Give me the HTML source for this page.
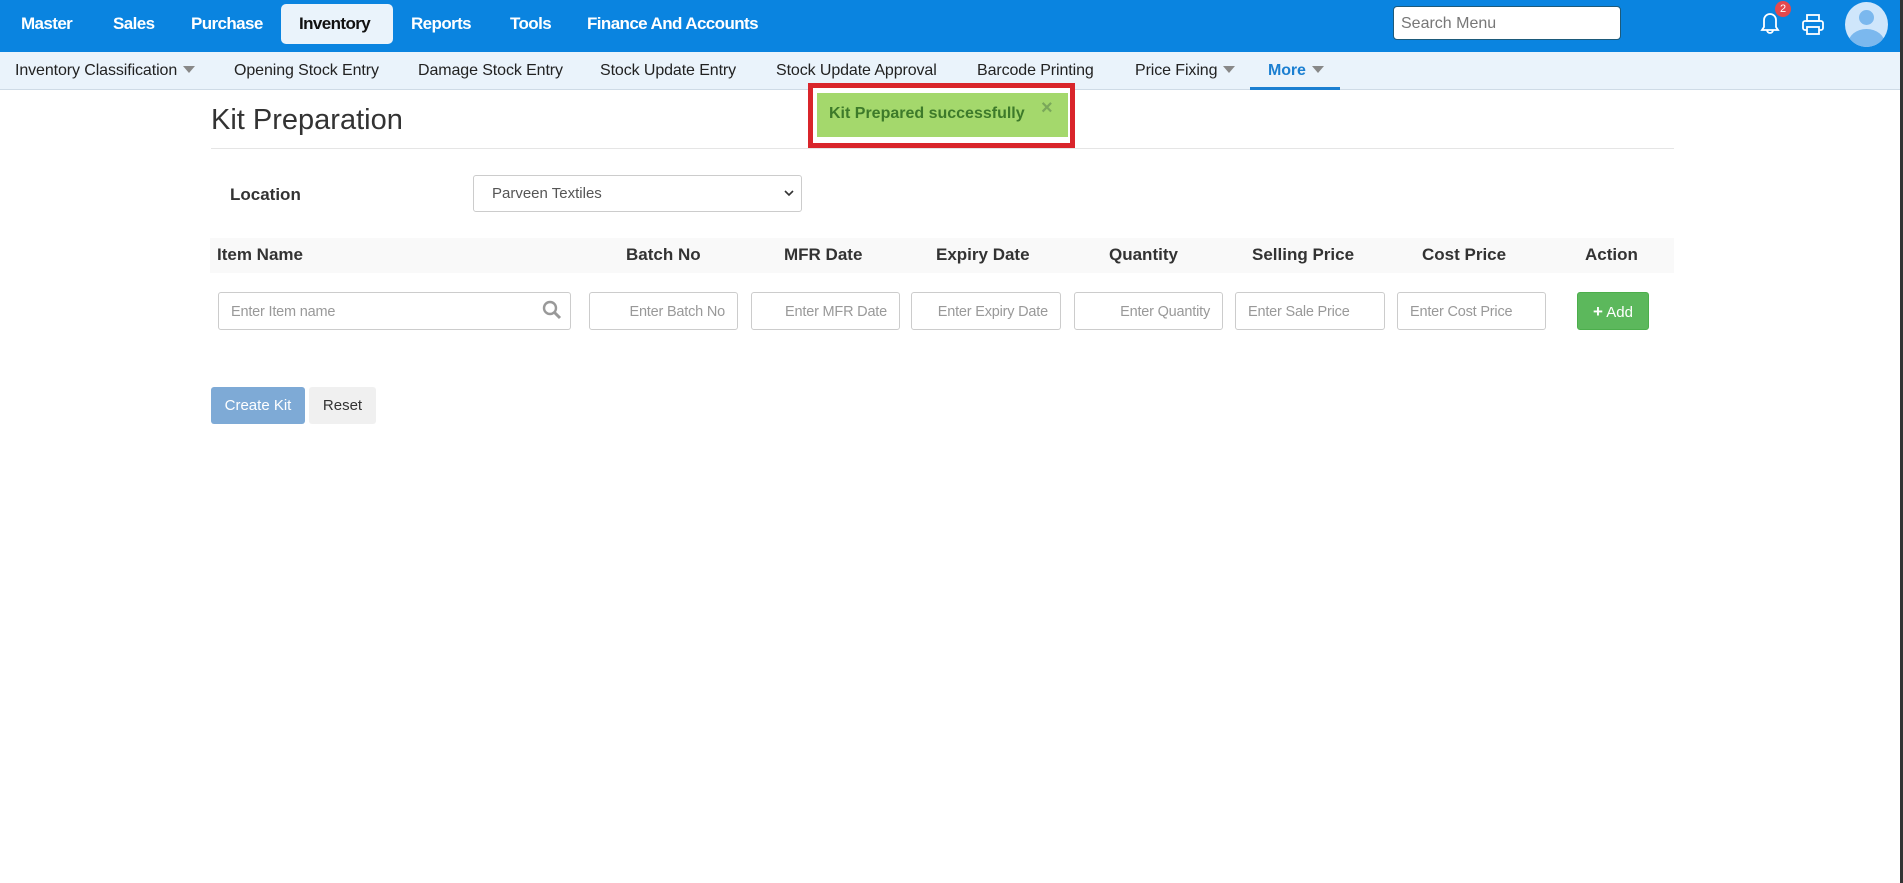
<!DOCTYPE html>
<html><head><meta charset="utf-8"><style>
*{box-sizing:border-box;margin:0;padding:0}
body{width:1903px;height:883px;background:#fff;font-family:"Liberation Sans",sans-serif;position:relative;overflow:hidden}
.a{position:absolute;white-space:nowrap}
.top{left:0;top:0;width:1900px;height:52px;background:#0a84e0}
.m{top:14px;color:#fff;font-weight:bold;font-size:17px;letter-spacing:-0.6px}
.sub{left:0;top:52px;width:1900px;height:38px;background:#eaf3fb;border-bottom:1px solid #cfdbe6}
.s{top:62px;font-size:16px;color:#222;letter-spacing:-0.1px}
.tri{display:inline-block;width:0;height:0;border-left:6px solid transparent;border-right:6px solid transparent;border-top:7px solid #888;margin-left:6px;vertical-align:2px}
.h{top:245px;font-weight:bold;font-size:17px;color:#333}
.in{top:292px;height:38px;border:1px solid #ccc;border-radius:3px;font-size:14.5px;color:#999;padding:11px 12px 0;letter-spacing:-0.2px}
</style></head><body>
<div class="a top"></div>
<div class="a" style="left:281px;top:4px;width:112px;height:40px;background:#eaf3fb;border-radius:5px"></div>
<div class="a m" style="left:21px">Master</div>
<div class="a m" style="left:113px">Sales</div>
<div class="a m" style="left:191px">Purchase</div>
<div class="a m" style="left:299px;color:#111">Inventory</div>
<div class="a m" style="left:411px">Reports</div>
<div class="a m" style="left:510px">Tools</div>
<div class="a m" style="left:587px">Finance And Accounts</div>
<div class="a" style="left:1393px;top:6px;width:228px;height:34px;background:#fff;border:1px solid #1d5a7a;border-radius:4px;font-size:16px;color:#777;padding:8px 7px">Search Menu</div>
<svg class="a" style="left:1756px;top:8px" width="28" height="30" viewBox="0 0 28 30"><path d="M6 22 L8 19 V12 A6 6 0 0 1 20 12 V19 L22 22 Z M11 22 a3 3 0 0 0 6 0" fill="none" stroke="#fff" stroke-width="1.8"/></svg>
<div class="a" style="left:1775px;top:1px;width:16px;height:16px;border-radius:8px;background:#e5484d;color:#fff;font-size:11px;text-align:center;line-height:16px">2</div>
<svg class="a" style="left:1800px;top:12px" width="26" height="26" viewBox="0 0 26 26"><rect x="7" y="3" width="12" height="6" fill="none" stroke="#fff" stroke-width="1.8"/><rect x="3" y="9" width="20" height="9" rx="2" fill="none" stroke="#fff" stroke-width="1.8"/><rect x="7" y="15" width="12" height="7" fill="#0a84e0" stroke="#fff" stroke-width="1.8"/></svg>
<div class="a" style="left:1845px;top:2px;width:43px;height:45px;border-radius:50%;background:#cfe6fb;overflow:hidden">
<div class="a" style="left:14px;top:8px;width:15px;height:15px;border-radius:50%;background:#7bb8ee"></div>
<div class="a" style="left:3px;top:27px;width:37px;height:30px;border-radius:50%;background:#7bb8ee"></div></div>
<div class="a" style="left:1900px;top:0;width:3px;height:883px;background:#333"></div>

<div class="a sub"></div>
<div class="a s" style="left:15px">Inventory Classification<span class="tri"></span></div>
<div class="a s" style="left:234px">Opening Stock Entry</div>
<div class="a s" style="left:418px">Damage Stock Entry</div>
<div class="a s" style="left:600px">Stock Update Entry</div>
<div class="a s" style="left:776px">Stock Update Approval</div>
<div class="a s" style="left:977px">Barcode Printing</div>
<div class="a s" style="left:1135px">Price Fixing<span class="tri"></span></div>
<div class="a s" style="left:1268px;color:#1b7fd1;font-weight:bold">More<span class="tri"></span></div>
<div class="a" style="left:1250px;top:87px;width:90px;height:3px;background:#1b7fd1"></div>

<div class="a" style="left:211px;top:104px;font-size:29px;color:#333">Kit Preparation</div>
<div class="a" style="left:211px;top:148px;width:1463px;height:1px;background:#e5e5e5"></div>

<div class="a" style="left:808px;top:83px;width:267px;height:65px;border:5px solid #d9252b;background:#fff"></div>
<div class="a" style="left:817px;top:93px;width:251px;height:44px;background:#a4d86c"></div>
<div class="a" style="left:829px;top:105px;font-size:16px;font-weight:bold;color:#3d7a2a">Kit Prepared successfully</div>
<div class="a" style="left:1041px;top:97px;font-size:20px;font-weight:bold;color:#7aa85a">×</div>

<div class="a" style="left:230px;top:185px;font-size:17px;font-weight:bold;color:#333">Location</div>
<div class="a" style="left:473px;top:175px;width:329px;height:37px;border:1px solid #ccc;border-radius:3px;font-size:15px;color:#555;padding:9px 18px">Parveen Textiles</div>
<svg class="a" style="left:784px;top:188px" width="10" height="10" viewBox="0 0 10 10"><path d="M1 3 L5 7 L9 3" fill="none" stroke="#333" stroke-width="1.6"/></svg>

<div class="a" style="left:210px;top:238px;width:1464px;height:35px;background:#f9f9f9"></div>
<div class="a h" style="left:217px">Item Name</div>
<div class="a h" style="left:626px">Batch No</div>
<div class="a h" style="left:784px">MFR Date</div>
<div class="a h" style="left:936px">Expiry Date</div>
<div class="a h" style="left:1109px">Quantity</div>
<div class="a h" style="left:1252px">Selling Price</div>
<div class="a h" style="left:1422px">Cost Price</div>
<div class="a h" style="left:1585px">Action</div>

<div class="a in" style="left:218px;width:353px">Enter Item name</div>
<svg class="a" style="left:542px;top:300px" width="20" height="22" viewBox="0 0 20 22"><circle cx="8" cy="8" r="6" fill="none" stroke="#999" stroke-width="2.4"/><path d="M12.5 12.5 L18 18" stroke="#999" stroke-width="3"/></svg>
<div class="a in" style="left:589px;width:149px;text-align:right;padding-right:12px">Enter Batch No</div>
<div class="a in" style="left:751px;width:149px;text-align:right;padding-right:12px">Enter MFR Date</div>
<div class="a in" style="left:911px;width:150px;text-align:right;padding-right:12px">Enter Expiry Date</div>
<div class="a in" style="left:1074px;width:149px;text-align:right;padding-right:12px">Enter Quantity</div>
<div class="a in" style="left:1235px;width:150px;overflow:hidden">Enter Sale Price</div>
<div class="a in" style="left:1397px;width:149px;overflow:hidden">Enter Cost Price</div>
<div class="a" style="left:1577px;top:292px;width:72px;height:38px;background:#5cb85c;border:1px solid #4cae4c;border-radius:3px;color:#fff;font-size:15px;padding-top:9px;text-align:center"><b style="font-size:17px">+</b> Add</div>

<div class="a" style="left:211px;top:387px;width:94px;height:37px;background:#7eaad6;border-radius:3px;color:#fff;font-size:15px;text-align:center;padding-top:10px">Create Kit</div>
<div class="a" style="left:309px;top:387px;width:67px;height:37px;background:#f0f0f0;border-radius:3px;color:#333;font-size:15px;text-align:center;padding-top:10px">Reset</div>
</body></html>
